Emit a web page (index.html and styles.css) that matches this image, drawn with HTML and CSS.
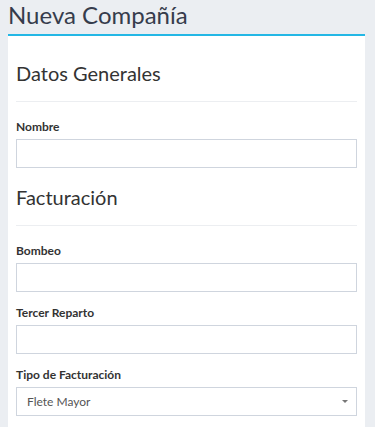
FILE: index.html
```html
<!DOCTYPE html>
<html lang="es">
<head>
  <meta charset="UTF-8">
  <meta name="viewport" content="width=device-width, initial-scale=1.0">
  <title>Nueva Compañía</title>
  <link rel="stylesheet" href="styles.css">
</head>
<body>

<h1 class="page-title">Nueva Compañía</h1>

<div class="panel">
  <h4 class="section-title first">Datos Generales</h4>
  <hr class="divider">

  <div class="form-group">
    <label for="nombre">Nombre</label>
    <input type="text" id="nombre" class="form-control">
  </div>

  <h4 class="section-title">Facturación</h4>
  <hr class="divider">

  <div class="form-group">
    <label for="bombeo">Bombeo</label>
    <input type="text" id="bombeo" class="form-control">
  </div>

  <div class="form-group">
    <label for="tercer">Tercer Reparto</label>
    <input type="text" id="tercer" class="form-control">
  </div>

  <div class="form-group">
    <label for="tipo">Tipo de Facturación</label>
    <div class="select-wrap">
      <select id="tipo" class="form-control">
        <option>Flete Mayor</option>
      </select>
    </div>
  </div>
</div>

</body>
</html>
```

FILE: styles.css
```css
body {
  margin: 0;
  background-color: #ebeef2;
  font-family: Lato, "Open Sans", sans-serif;
  color: #333;
}
.page-title {
  margin: 0;
  padding: 0 8px;
  font-size: 24px;
  font-weight: normal;
  line-height: 29px;
  color: #363c4c;
}
.panel {
  margin: 5px 10px 0 8px;
  padding: 0 8px 20px;
  background-color: #fff;
  border-top: 2px solid #23b7e5;
}
.section-title {
  margin: 0;
  padding-top: 17px;
  font-size: 20px;
  font-weight: normal;
  line-height: 24px;
  color: #333;
}
.section-title.first {
  padding-top: 25px;
}
.divider {
  margin: 16px 0 4px;
  border: none;
  border-top: 1px solid #eceef1;
}
.form-group {
  padding-top: 13px;
}
.form-group label {
  display: block;
  margin-bottom: 5px;
  font-size: 12px;
  font-weight: bold;
  line-height: 15px;
  color: #333;
}
.form-control {
  display: block;
  box-sizing: border-box;
  width: 100%;
  height: 29px;
  margin: 0;
  padding: 0 10px;
  border: 1px solid #cfd5de;
  border-radius: 0;
  background-color: #fff;
  font-family: Lato, "Open Sans", sans-serif;
  font-size: 12px;
  color: #555;
}
.select-wrap {
  position: relative;
}
.select-wrap select {
  -webkit-appearance: none;
  appearance: none;
}
.select-wrap::after {
  content: "";
  position: absolute;
  right: 9px;
  top: 13px;
  border-left: 3px solid transparent;
  border-right: 3px solid transparent;
  border-top: 3px solid #777;
}
```
